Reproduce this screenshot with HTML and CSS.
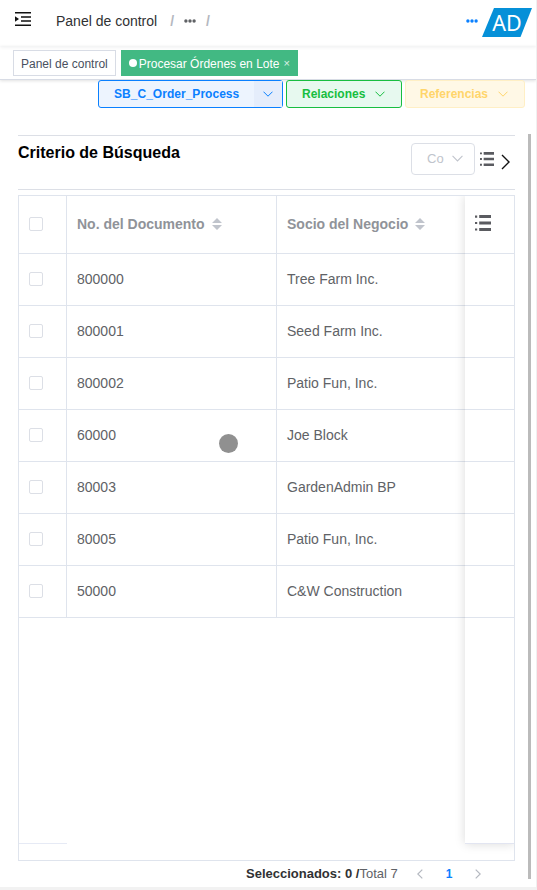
FILE: index.html
```html
<!DOCTYPE html>
<html lang="es">
<head>
<meta charset="utf-8">
<title>Procesar Órdenes en Lote</title>
<link rel="stylesheet" href="styles.css">
</head>
<body>
<svg class="defs" width="0" height="0">
  <symbol id="list" viewBox="0 0 16 16"><path fill="#5a5b60" d="M4.200 0H16v3H4.200zM4.200 6.500H16v3H4.200zM4.200 13H16v3H4.200zM0 .5h2.200v2.200H0zM0 6.900h2.200v2.200H0zM0 13.400h2.200v2.200H0z"/></symbol>
  <symbol id="down" viewBox="0 0 10 6"><path d="M.5.7 5 5.200 9.500.7" fill="none" stroke="currentColor"/></symbol>
  <symbol id="sort" viewBox="0 0 10 12"><path d="M5 0 10 5H0zM0 7h10l-5 5z" fill="#c0c4cc"/></symbol>
</svg>
<div class="app">
  <header class="navbar">
    <svg class="burger" width="16" height="14" viewBox="0 0 16 14"><path d="M0 .8h16M6 5h10M6 9h10M0 13.200h16" stroke="#111" stroke-width="1.500"/><path d="M0 4.200 4 7 0 9.800z" fill="#111"/></svg>
    <nav class="crumbs"><span>Panel de control</span><i class="slash one">/</i><svg class="dots" width="12" height="4" viewBox="0 0 12 4"><g fill="#606266"><circle cx="1.900" cy="2" r="1.700"/><circle cx="6" cy="2" r="1.700"/><circle cx="10.100" cy="2" r="1.700"/></g></svg><i class="slash two">/</i></nav>
    <svg class="more" width="12" height="4" viewBox="0 0 12 4"><g fill="#0a80ff"><circle cx="1.900" cy="2" r="1.700"/><circle cx="6" cy="2" r="1.700"/><circle cx="10.100" cy="2" r="1.700"/></g></svg>
    <div class="avatar">AD</div>
  </header>
  <div class="tabs">
    <span class="tab">Panel de control</span>
    <span class="tab active"><i class="dot"></i><span class="label">Procesar Órdenes en Lote</span><b class="close">×</b></span>
  </div>
  <div class="actions">
    <div class="btn primary"><span>SB_C_Order_Process</span><div class="drop"><svg width="10" height="6"><use href="#down"/></svg></div></div>
    <div class="btn success"><span>Relaciones</span><svg width="10" height="6"><use href="#down"/></svg></div>
    <div class="btn warning"><span>Referencias</span><svg width="10" height="6"><use href="#down"/></svg></div>
  </div>
  <main class="content">
    <section class="criteria">
      <h1>Criterio de Búsqueda</h1>
      <div class="select"><span>Co</span><svg width="11" height="7"><use href="#down"/></svg></div>
      <svg class="list-small" width="14" height="14"><use href="#list"/></svg>
      <svg class="next" width="9" height="16" viewBox="0 0 9 16"><path d="M1 1l7 7-7 7" fill="none" stroke="#111" stroke-width="1.400"/></svg>
    </section>
    <div class="table">
      <div class="row head"><div class="cell"><i class="check"></i></div><div class="cell">No. del Documento<svg class="sort" width="10" height="12"><use href="#sort"/></svg></div><div class="cell">Socio del Negocio<svg class="sort" width="10" height="12"><use href="#sort"/></svg></div></div>
      <div class="row"><div class="cell"><i class="check"></i></div><div class="cell">800000</div><div class="cell">Tree Farm Inc.</div></div>
      <div class="row"><div class="cell"><i class="check"></i></div><div class="cell">800001</div><div class="cell">Seed Farm Inc.</div></div>
      <div class="row"><div class="cell"><i class="check"></i></div><div class="cell">800002</div><div class="cell">Patio Fun, Inc.</div></div>
      <div class="row"><div class="cell"><i class="check"></i></div><div class="cell">60000</div><div class="cell">Joe Block</div></div>
      <div class="row"><div class="cell"><i class="check"></i></div><div class="cell">80003</div><div class="cell">GardenAdmin BP</div></div>
      <div class="row"><div class="cell"><i class="check"></i></div><div class="cell">80005</div><div class="cell">Patio Fun, Inc.</div></div>
      <div class="row"><div class="cell"><i class="check"></i></div><div class="cell">50000</div><div class="cell">C&amp;W Construction</div></div>
      <div class="left-end"></div>
      <div class="fixed">
        <div class="fixed-head"><svg width="16" height="16"><use href="#list"/></svg></div>
        <div class="fixed-row"></div><div class="fixed-row"></div><div class="fixed-row"></div><div class="fixed-row"></div><div class="fixed-row"></div><div class="fixed-row"></div><div class="fixed-row"></div>
      </div>
    </div>
    <footer class="pager">
      <b>Seleccionados: 0 /</b><span>Total 7</span>
      <svg class="prev" width="6" height="10" viewBox="0 0 6 10"><path d="M5.300.6.8 5l4.500 4.400" fill="none" stroke="#b4b8c0" stroke-width="1.200"/></svg>
      <b class="page">1</b>
      <svg class="fwd" width="6" height="10" viewBox="0 0 6 10"><path d="M.7.6 5.200 5 .7 9.400" fill="none" stroke="#b4b8c0" stroke-width="1.200"/></svg>
    </footer>
  </main>
  <div class="scroll"></div>
  <div class="pointer"></div>
</div>
</body>
</html>
```
FILE: styles.css
```css
* { box-sizing: border-box; }
body { margin: 0; font-family: "Liberation Sans", Arial, sans-serif; font-size: 14px; color: #606266; background: #fff; }
i { font-style: normal; }
svg { display: block; flex: none; }
.defs { position: absolute; }
.app { position: relative; width: 537px; height: 890px; overflow: hidden; border-right: 1px solid #f0f0f0; border-bottom: 3px solid #f2f2f2; white-space: nowrap; }
.navbar { display: flex; height: 46px; padding: 0 4px 0 15px; box-shadow: 0 1px 4px rgba(0,21,41,.08); }
.burger { margin-top: 12px; }
.crumbs { display: flex; margin-left: 25px; line-height: 42px; color: #303133; font-size: 14px; }
.slash { color: #b4b8c0; font-weight: bold; }
.one { margin-left: 13px; }
.dots { margin: 19px 0 0 10px; }
.two { margin-left: 10px; }
.more { margin: 19px 4px 0 auto; }
.avatar { width: 50px; height: 29px; margin-top: 8px; background: #0590d8; clip-path: polygon(24% 0, 100% 0, 77% 100%, 0 100%); color: #fff; font: 21.5px/29px "Noto Sans", sans-serif; text-align: center; }
.tabs { display: flex; gap: 5px; height: 34px; padding: 4px 13px 0; border-bottom: 1px solid #d8dce5; box-shadow: 0 1px 3px rgba(0,0,0,.12); }
.tab { height: 26px; padding: 0 7px; border: 1px solid #d8dce5; color: #495060; font-size: 12px; line-height: 26px; }
.active { display: flex; align-items: center; width: 177px; padding-right: 0; background: #42b983; border-color: #42b983; color: #fff; }
.label { padding-top: 2px; }
.dot { flex: none; width: 8px; height: 8px; margin-right: 2px; border-radius: 50%; background: #fff; }
.close { margin-left: 4px; font-size: 11px; font-weight: normal; opacity: .8; }
.actions { display: flex; justify-content: flex-end; gap: 3px; height: 55px; padding-right: 11px; }
.btn { position: relative; display: flex; align-items: center; height: 28px; padding: 0 16px 0 15px; border: 1px solid; border-radius: 3px; font-size: 12px; font-weight: bold; }
.primary { width: 185px; padding-right: 0; color: #0a80ff; background: #edf4fe; letter-spacing: .03px; }
.drop { display: flex; align-items: center; justify-content: center; width: 28px; height: 26px; margin-left: auto; background: #e5edfb; }
.success { width: 116px; justify-content: space-between; color: #18be40; background: #e7f9ef; }
.warning { width: 120px; padding-left: 14px; justify-content: space-between; color: #ffd56b; background: #fff8e6; border-color: #ffefc5; }
.content { width: 497px; margin-left: 18px; }
.criteria { display: flex; height: 55px; border-top: 1px solid #dcdfe6; border-bottom: 1px solid #dcdfe6; }
h1 { margin: 8px auto 0 0; color: #000; font-size: 16px; line-height: 18px; }
.select { display: flex; align-items: center; justify-content: space-between; width: 64px; height: 32px; margin-top: 7px; padding: 0 11px 2px 15px; border: 1px solid #dcdfe6; border-radius: 4px; color: #c0c4cc; font-size: 13px; }
.list-small { margin: 16px 0 0 5px; }
.next { margin: 18px 5px 0 7px; }
.table { position: relative; height: 666px; margin-top: 5px; border: 1px solid #dfe4ed; overflow: hidden; }
.row { display: grid; grid-template-columns: 48px 210px 1fr; height: 52px; }
.head { height: 58px; color: #909399; font-weight: bold; }
.cell { display: flex; align-items: center; padding: 0 0 2px 10px; border-right: 1px solid #dfe4ed; border-bottom: 1px solid #dfe4ed; }
.cell:last-child { border-right: 0; }
.check { width: 14px; height: 14px; border: 1px solid #dcdfe6; border-radius: 2px; }
.sort { margin-left: 7px; }
.left-end { width: 48px; height: 226px; border-bottom: 1px solid #e6eaf5; }
.fixed { position: absolute; top: 0; right: 0; width: 49px; height: 648px; background: #fff; border-bottom: 1px solid #e2e5f1; box-shadow: 0 0 10px rgba(0,0,0,.15); }
.fixed-head { height: 58px; padding: 19px 0 0 10px; border-bottom: 1px solid #dfe4ed; }
.fixed-row { height: 52px; border-bottom: 1px solid #dfe4ed; }
.pager { display: flex; align-items: center; height: 25px; padding-left: 228px; font-size: 13px; }
.pager > b { color: #303133; }
.prev { margin-left: 19px; }
.pager .page { margin-left: 23px; color: #0a80ff; font-size: 12px; }
.fwd { margin-left: 23px; }
.scroll { position: absolute; left: 528px; top: 134px; width: 3px; height: 745px; background: #bbb; }
.pointer { position: absolute; left: 219px; top: 434px; width: 19px; height: 19px; border-radius: 50%; background: #909090; }
```
